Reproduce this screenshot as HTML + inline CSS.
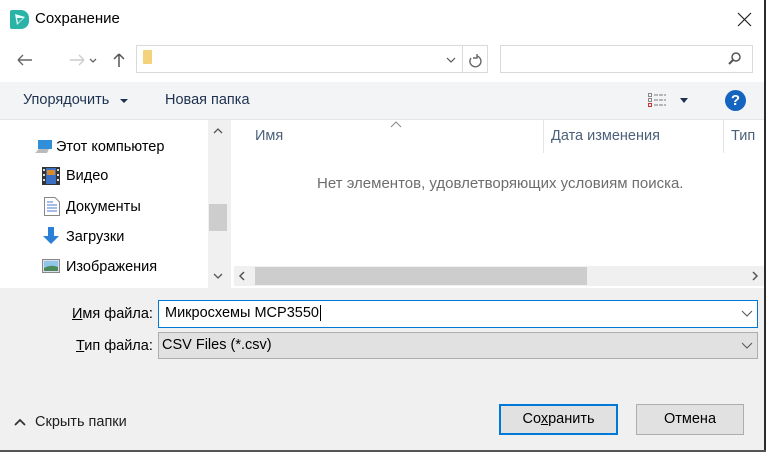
<!DOCTYPE html>
<html><head><meta charset="utf-8"><style>
*{margin:0;padding:0;box-sizing:border-box}
body{width:766px;height:452px;overflow:hidden;background:#fff;font-family:"Segoe UI","Liberation Sans","DejaVu Sans",sans-serif;font-size:14.5px;color:#000;position:relative}
.a{position:absolute;white-space:nowrap}
</style></head><body>
<!-- title -->
<div class="a" style="left:10px;top:10px;width:19px;height:19px;background:#2bb3a8;border-radius:2px 8px 8px 2px"></div>
<svg class="a" style="left:10px;top:10px" width="19" height="19"><path d="M5 4 L15 7 L7 15 Z" fill="#e9fbf8"/><path d="M7 8 L13 8 L8 13Z" fill="#2bb3a8"/></svg>
<div class="a" style="left:35px;top:10px;font-size:15px">Сохранение</div>
<svg class="a" style="left:737px;top:12px" width="15" height="15"><path d="M1 1L14 14M14 1L1 14" stroke="#222" stroke-width="1.2"/></svg>
<!-- nav -->
<svg class="a" style="left:14px;top:52px" width="125" height="16"><path d="M4 8H18M4 8L9 3M4 8L9 13" stroke="#666" stroke-width="1.4" fill="none"/><path d="M56 8H70M70 8L65 3M70 8L65 13" stroke="#ccc" stroke-width="1.4" fill="none"/><path d="M76 7L79 10L82 7" stroke="#666" stroke-width="1.3" fill="none"/><path d="M105 15V2M105 2L100 7M105 2L110 7" stroke="#555" stroke-width="1.5" fill="none"/></svg>
<div class="a" style="left:136px;top:45px;width:352px;height:28px;border:1px solid #d9d9d9"></div>
<div class="a" style="left:143px;top:50px;width:9px;height:14px;background:#f3d27a;border-radius:1px"></div>
<div class="a" style="left:462px;top:46px;width:1px;height:26px;background:#d9d9d9"></div>
<svg class="a" style="left:444px;top:54px" width="40" height="14"><path d="M3 4L7 8L11 4" stroke="#555" stroke-width="1.2" fill="none"/><path d="M33 2 A5.5 5.5 0 1 1 27 4" stroke="#666" stroke-width="1.4" fill="none"/><path d="M33 0V4H29" stroke="#666" stroke-width="1.4" fill="none"/></svg>
<div class="a" style="left:500px;top:45px;width:253px;height:28px;border:1px solid #d9d9d9"></div>
<svg class="a" style="left:727px;top:51px" width="16" height="16"><circle cx="9" cy="6" r="4" stroke="#555" stroke-width="1.5" fill="none"/><path d="M6 9L2 13" stroke="#555" stroke-width="2"/></svg>
<!-- toolbar -->
<div class="a" style="left:0;top:82px;width:764px;height:38px;background:#f3f4f6;border-bottom:1px solid #e4e6ea"></div>
<div class="a" style="left:23px;top:92px;color:#1e3250">Упорядочить</div>
<div class="a" style="left:120px;top:99px;border-left:4px solid transparent;border-right:4px solid transparent;border-top:4px solid #1e3250"></div>
<div class="a" style="left:165px;top:92px;color:#1e3250">Новая папка</div>
<svg class="a" style="left:648px;top:93px" width="22" height="16"><g fill="none" stroke="#888"><rect x="0.5" y="0.5" width="3" height="3"/><rect x="0.5" y="5.5" width="3" height="3"/><rect x="0.5" y="10.5" width="3" height="3" stroke="#c33"/></g><path d="M6 2H18M6 7H18M6 12H18" stroke="#777" stroke-dasharray="4 1"/></svg>
<div class="a" style="left:680px;top:98px;border-left:4.5px solid transparent;border-right:4.5px solid transparent;border-top:5px solid #1e3250"></div>
<div class="a" style="left:725px;top:90px;width:21px;height:21px;border-radius:50%;background:#1565c0;color:#fff;font-weight:bold;font-size:15px;text-align:center;line-height:21px">?</div>
<!-- nav pane -->
<svg class="a" style="left:34px;top:139px" width="20" height="16"><rect x="4" y="1" width="14" height="9" fill="#2f8fd8"/><path d="M1 14L5 10H15L13 14Z" fill="#bbb"/></svg>
<div class="a" style="left:56px;top:139px">Этот компьютер</div>
<svg class="a" style="left:42px;top:167px" width="18" height="18"><rect width="18" height="18" fill="#333"/><rect x="4" y="1" width="10" height="16" fill="#3a6fc4"/><rect x="5" y="3" width="8" height="5" fill="#d98a2a"/><g fill="#ddd"><rect x="1" y="2" width="2" height="2"/><rect x="1" y="7" width="2" height="2"/><rect x="1" y="12" width="2" height="2"/><rect x="15" y="2" width="2" height="2"/><rect x="15" y="7" width="2" height="2"/><rect x="15" y="12" width="2" height="2"/></g></svg>
<div class="a" style="left:66px;top:168px">Видео</div>
<svg class="a" style="left:44px;top:197px" width="16" height="19"><path d="M0.5 0.5H11L15.5 5V18.5H0.5Z" fill="#fff" stroke="#888"/><path d="M3 5H9M3 8H13M3 11H13M3 14H13" stroke="#4a7ed0"/></svg>
<div class="a" style="left:66px;top:199px">Документы</div>
<svg class="a" style="left:42px;top:227px" width="18" height="18"><path d="M6 0H12V9H17L9 17L1 9H6Z" fill="#2b7fd6"/></svg>
<div class="a" style="left:66px;top:229px">Загрузки</div>
<svg class="a" style="left:42px;top:259px" width="18" height="14"><rect x="0.5" y="0.5" width="17" height="13" fill="#dde" stroke="#888"/><rect x="2" y="2" width="14" height="10" fill="#8fc7e8"/><path d="M2 9Q9 5 16 8V12H2Z" fill="#4a8a5a"/></svg>
<div class="a" style="left:66px;top:259px">Изображения</div>
<div class="a" style="left:208px;top:120px;width:20px;height:168px;background:#f0f0f0"></div>
<div class="a" style="left:209px;top:204px;width:18px;height:27px;background:#cdcdcd"></div>
<svg class="a" style="left:208px;top:124px" width="20" height="160"><path d="M6 9L10 5L14 9" stroke="#555" stroke-width="1.3" fill="none"/><path d="M6 150L10 154L14 150" stroke="#555" stroke-width="1.3" fill="none"/></svg>
<div class="a" style="left:228px;top:120px;width:3px;height:168px;background:#f0f0f0"></div>
<!-- list -->
<div class="a" style="left:255px;top:128px;color:#4c607a">Имя</div>
<svg class="a" style="left:390px;top:121px" width="12" height="7"><path d="M1 6L6 1L11 6" stroke="#888" fill="none"/></svg>
<div class="a" style="left:543px;top:120px;width:1px;height:33px;background:#e5e5e5"></div>
<div class="a" style="left:551px;top:128px;color:#4c607a">Дата изменения</div>
<div class="a" style="left:723px;top:120px;width:1px;height:33px;background:#e5e5e5"></div>
<div class="a" style="left:731px;top:128px;color:#4c607a">Тип</div>
<div class="a" style="left:317px;top:175px;color:#6d6d6d;font-size:15px">Нет элементов, удовлетворяющих условиям поиска.</div>
<div class="a" style="left:234px;top:266px;width:530px;height:20px;background:#f0f0f0"></div>
<div class="a" style="left:255px;top:267px;width:332px;height:18px;background:#cdcdcd"></div>
<svg class="a" style="left:234px;top:266px" width="530" height="20"><path d="M10 6L6 10L10 14" stroke="#555" stroke-width="1.5" fill="none"/><path d="M519 6L523 10L519 14" stroke="#555" stroke-width="1.5" fill="none"/></svg>
<!-- bottom -->
<div class="a" style="left:0;top:288px;width:764px;height:164px;background:#f0f0f0"></div>
<div class="a" style="left:72px;top:306px"><u>И</u>мя файла:</div>
<div class="a" style="left:158px;top:300px;width:600px;height:28px;background:#fff;border:1px solid #0078d7"></div>
<div class="a" style="left:165px;top:305px">Микросхемы MCP3550<span style="border-left:1px solid #000;margin-left:1px"></span></div>
<svg class="a" style="left:741px;top:310px" width="12" height="8"><path d="M1 1L6 6L11 1" stroke="#555" fill="none"/></svg>
<div class="a" style="left:76px;top:338px"><u>Т</u>ип файла:</div>
<div class="a" style="left:158px;top:332px;width:600px;height:27px;background:#e1e1e1;border:1px solid #adadad"></div>
<div class="a" style="left:162px;top:337px">CSV Files (*.csv)</div>
<svg class="a" style="left:741px;top:342px" width="12" height="8"><path d="M1 1L6 6L11 1" stroke="#555" fill="none"/></svg>
<svg class="a" style="left:14px;top:418px" width="12" height="8"><path d="M1 7L6 2L11 7" stroke="#333" stroke-width="1.8" fill="none"/></svg>
<div class="a" style="left:35px;top:414px;color:#1e1e1e">Скрыть папки</div>
<div class="a" style="left:499px;top:404px;width:119px;height:31px;background:#e1e1e1;border:2px solid #0078d7;text-align:center;line-height:27px">Со<u>х</u>ранить</div>
<div class="a" style="left:636px;top:404px;width:108px;height:31px;background:#e1e1e1;border:1px solid #adadad;text-align:center;line-height:29px">Отмена</div>
<div class="a" style="left:764px;top:0;width:2px;height:452px;background:#2b2b2b"></div>
<div class="a" style="left:0;top:450px;width:766px;height:2px;background:#555"></div>
</body></html>
